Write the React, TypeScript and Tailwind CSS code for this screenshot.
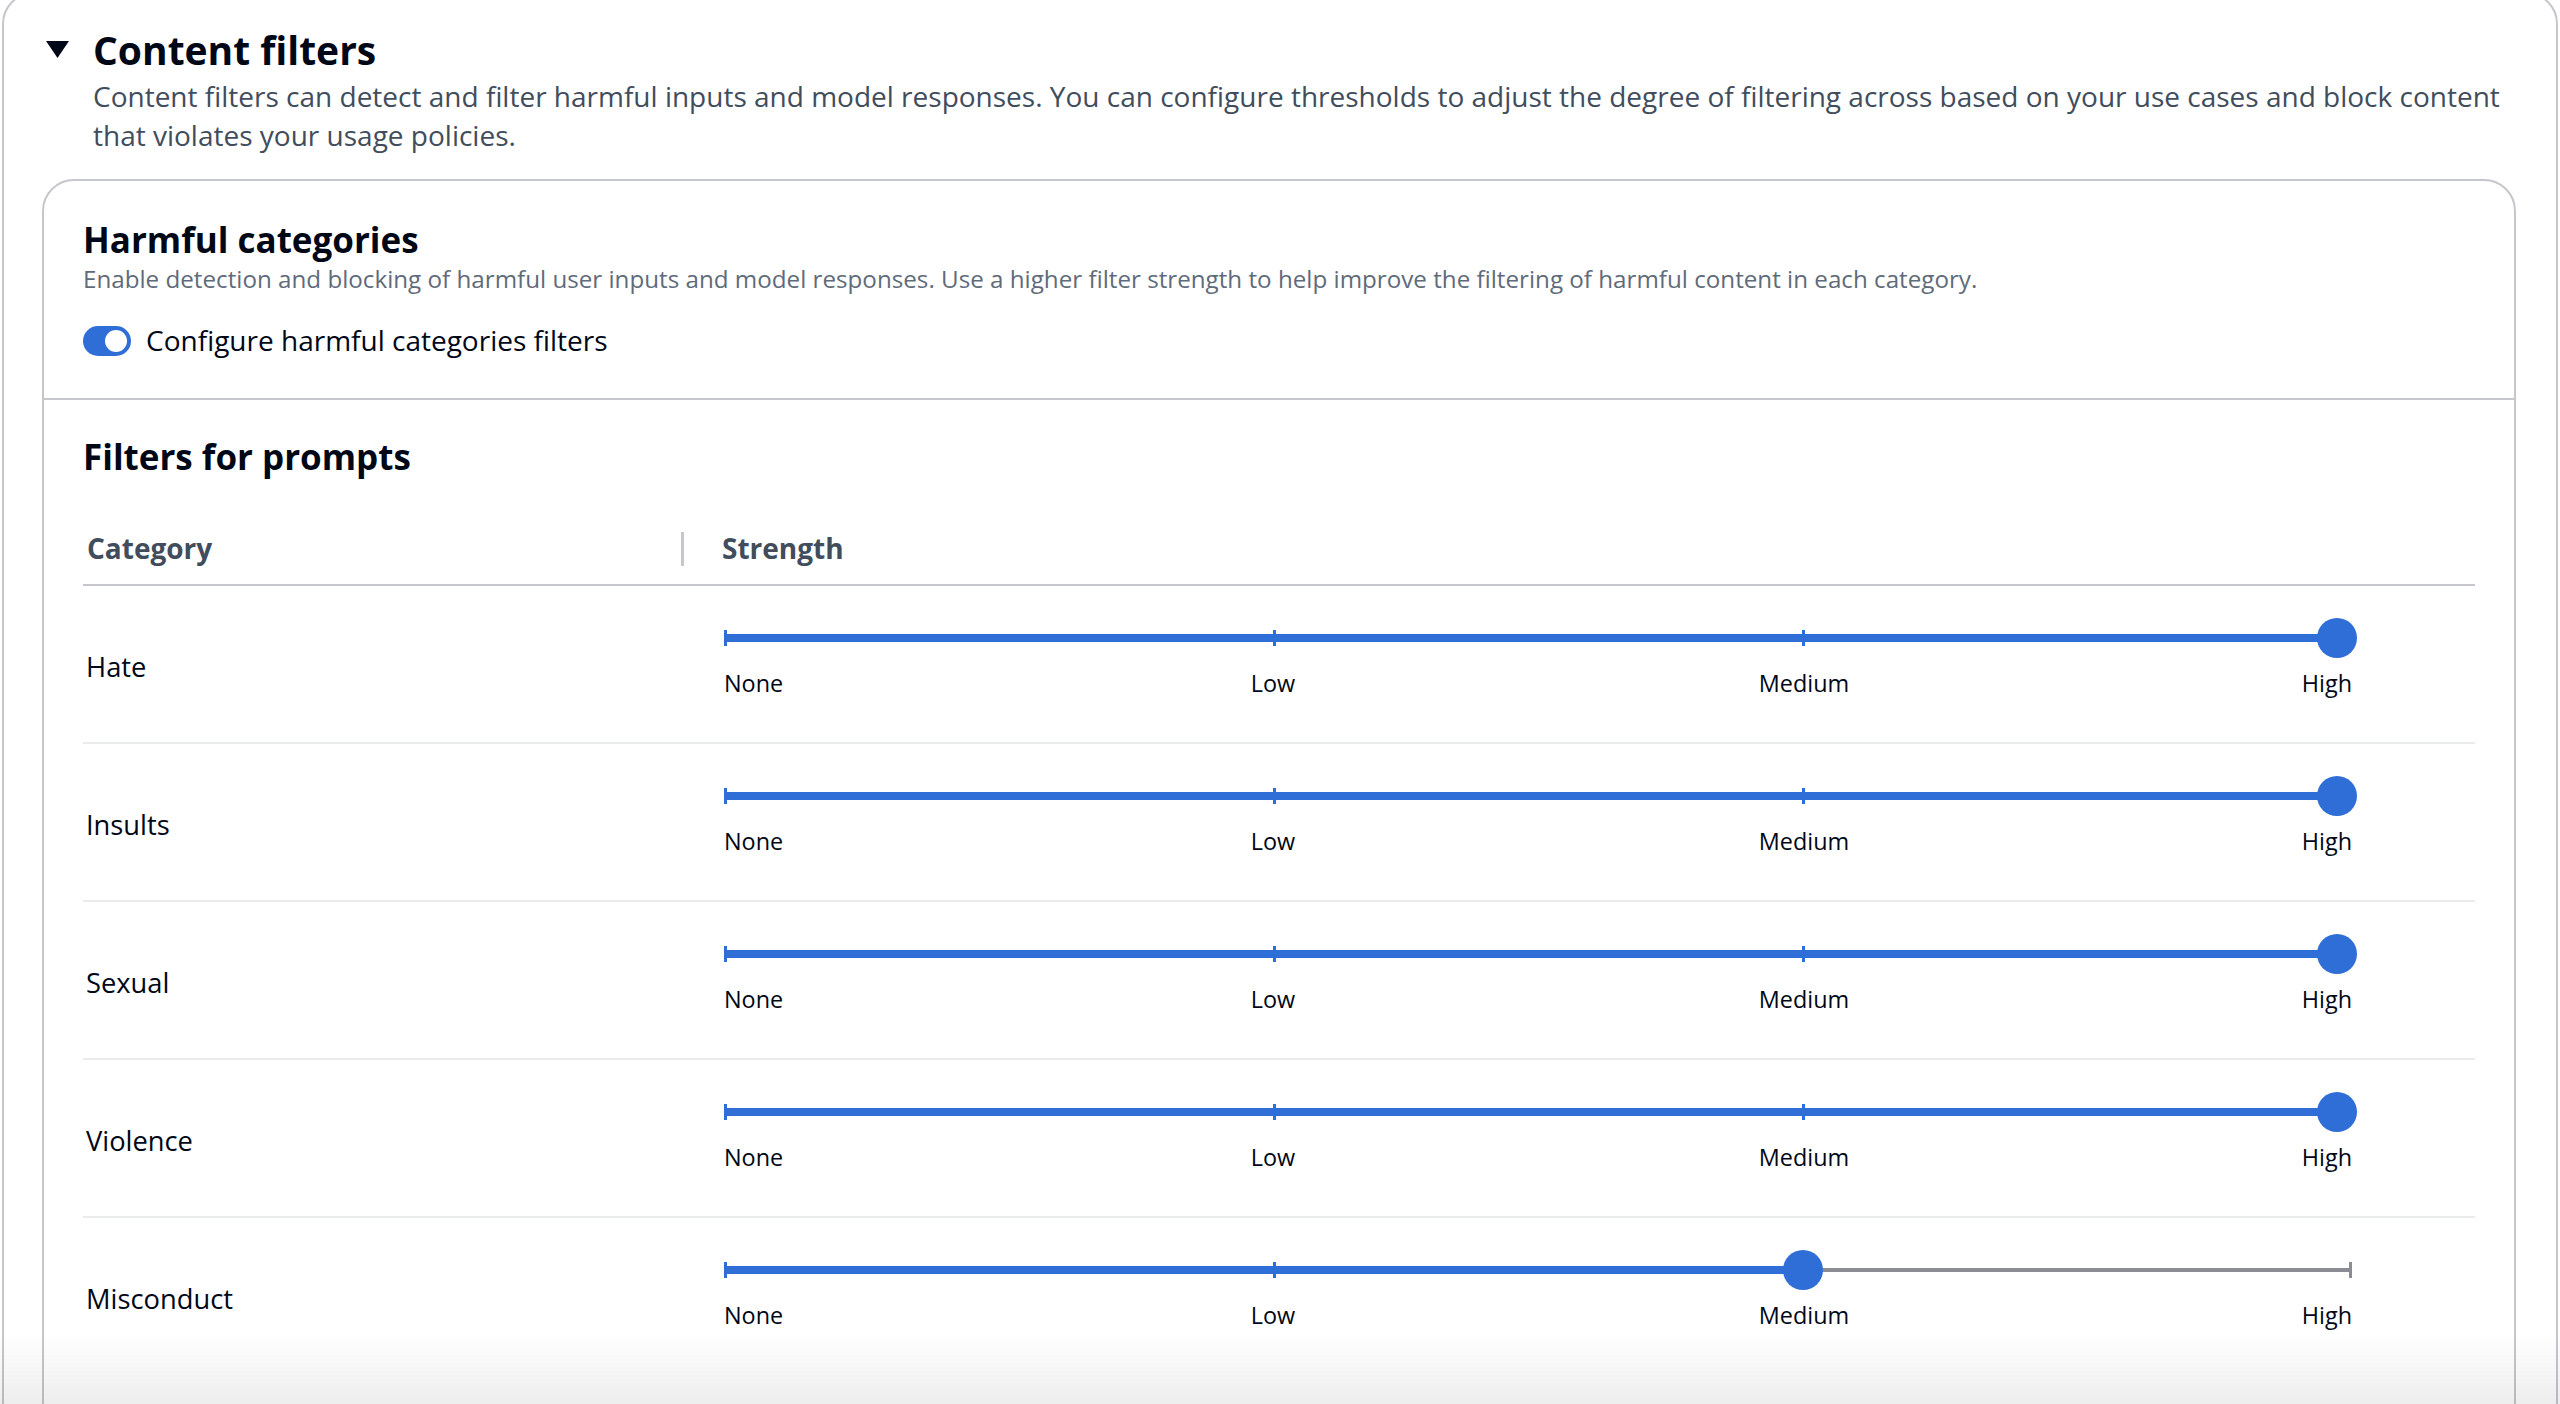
import React from "react";

const categories = [
  { name: "Hate", value: 3 },
  { name: "Insults", value: 3 },
  { name: "Sexual", value: 3 },
  { name: "Violence", value: 3 },
  { name: "Misconduct", value: 2 },
];

const ticks = [0, 550, 1079, 1628];

function StrengthSlider({ value }: { value: number }) {
  const thumbX = value === 3 ? 1613 : ticks[value];
  return (
    <div className="relative w-[1628px] h-[80px]">
      {/* rail */}
      <div className="absolute left-0 right-0 top-[18px] h-[4px] bg-[#8c8c94]" />
      {/* filled part */}
      <div className="absolute left-0 top-[16px] h-[8px] bg-[#2f6ed6]" style={{ width: thumbX }} />
      {ticks.map((x, i) => (
        <div
          key={i}
          className={`absolute top-[12px] h-[16px] w-[3px] ${x <= thumbX ? "bg-[#2f6ed6]" : "bg-[#8c8c94]"}`}
          style={{ left: i === 0 ? 0 : i === 3 ? x - 3 : x - 1.5 }}
        />
      ))}
      <div
        className="absolute top-0 h-[40px] w-[40px] rounded-full bg-[#2f6ed6]"
        style={{ left: thumbX - 20 }}
      />
      {/* labels */}
      <div className="absolute left-0 top-[50px] text-[23.4px] leading-[31px] text-[#000716]">None</div>
      <div className="absolute left-[549px] top-[50px] -translate-x-1/2 text-[23.4px] leading-[31px] text-[#000716]">Low</div>
      <div className="absolute left-[1080px] top-[50px] -translate-x-1/2 text-[23.4px] leading-[31px] text-[#000716]">Medium</div>
      <div className="absolute right-0 top-[50px] text-[23.4px] leading-[31px] text-[#000716]">High</div>
    </div>
  );
}

export default function App() {
  return (
    <div className="relative h-[1404px] overflow-hidden bg-white px-[2px] font-['Open_Sans',sans-serif]">
      <div className="-mt-[8px] rounded-[32px] border-2 border-[#c6c6cd] pb-[40px] pt-[34px]">
        {/* Expandable header */}
        <div className="pl-[42px] pr-[42px]">
          <div className="flex h-[43px] items-center gap-[24px]">
            <svg width="23" height="17" viewBox="0 0 23 17" className="shrink-0">
              <polygon points="0,0 23,0 11.5,17" fill="#000716" />
            </svg>
            <h1 className="text-[39px] font-bold leading-[43px] text-[#000716]">Content filters</h1>
          </div>
          <p className="mt-[6px] pl-[47px] text-[28px] leading-[39px] text-[#414d5c]">
            Content filters can detect and filter harmful inputs and model responses. You can configure thresholds to adjust the degree of filtering across based on your use cases and block content that violates your usage policies.
          </p>
        </div>

        {/* Harmful categories card */}
        <div className="ml-[38px] mr-[40px] mt-[24px] rounded-[32px] border-2 border-[#c6c6cd]">
          <div className="border-b-2 border-[#c6c6cd] px-[39px] pb-[38px] pt-[37px]">
            <h2 className="text-[35px] font-bold leading-[43px] text-[#000716]">Harmful categories</h2>
            <p className="mt-[2px] text-[24.2px] leading-[31px] text-[#5f6b7a]">
              Enable detection and blocking of harmful user inputs and model responses. Use a higher filter strength to help improve the filtering of harmful content in each category.
            </p>
            <div className="mt-[27px] flex items-center gap-[15px]">
              <div className="relative flex h-[30px] w-[48px] shrink-0 items-center justify-end rounded-full bg-[#2f6ed6] pr-[4px]">
                <div className="h-[22px] w-[22px] rounded-full bg-white" />
              </div>
              <span className="text-[28px] leading-[39px] text-[#000716]">Configure harmful categories filters</span>
            </div>
          </div>

          <div className="px-[39px] pb-[160px] pt-[35px]">
            <h3 className="text-[35px] font-bold leading-[43px] text-[#000716]">Filters for prompts</h3>

            <div className="mt-[35px]">
              <div className="flex items-center border-b-2 border-[#c6c6cd] py-[16px]">
                <div className="w-[598px] pl-[4px] text-[28px] font-bold leading-[39px] text-[#414d5c]">Category</div>
                <div className="h-[34px] w-[3px] bg-[#c6c6cd]" />
                <div className="pl-[38px] text-[28px] font-bold leading-[39px] text-[#414d5c]">Strength</div>
              </div>

              {categories.map((c, i) => (
                <div
                  key={c.name}
                  className={`flex border-b-2 ${i === categories.length - 1 ? "border-transparent" : "border-[#e9ebed]"}`}
                >
                  <div className="flex w-[600px] items-center pl-[3px] pt-[4px] text-[27.3px] leading-[39px] text-[#000716]">
                    {c.name}
                  </div>
                  <div className="pb-[44px] pl-[41px] pt-[32px]">
                    <StrengthSlider value={c.value} />
                  </div>
                </div>
              ))}
            </div>
          </div>
        </div>
      </div>

      {/* bottom fade from the screenshot */}
      <div className="pointer-events-none fixed inset-x-0 bottom-0 h-[70px] bg-gradient-to-b from-transparent to-[rgba(0,0,0,0.07)]" />
    </div>
  );
}
